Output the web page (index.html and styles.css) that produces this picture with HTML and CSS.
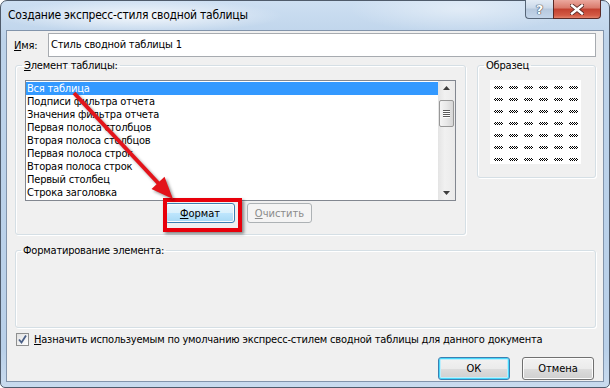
FILE: index.html
```html
<!DOCTYPE html>
<html lang="ru">
<head>
<meta charset="utf-8">
<title>Создание экспресс-стиля сводной таблицы</title>
<link rel="stylesheet" href="styles.css">
</head>
<body>
<div class="window">
  <div class="titlebar">
    <span class="title">Создание экспресс-стиля сводной таблицы</span>
    <div class="caption-btns">
      <div class="cbtn help">?</div>
      <div class="cbtn close">
        <svg width="14" height="11" viewBox="0 0 14 11">
          <path d="M2 1.5 L12 9.5 M12 1.5 L2 9.5" stroke="#5a2a26" stroke-width="4.2" stroke-linecap="square" fill="none"/>
          <path d="M2 1.5 L12 9.5 M12 1.5 L2 9.5" stroke="#ffffff" stroke-width="2.4" stroke-linecap="square" fill="none"/>
        </svg>
      </div>
    </div>
  </div>
  <div class="client">
    <div class="name-row">
      <span class="name-label"><u>И</u>мя:</span>
      <div class="textbox">Стиль сводной таблицы 1</div>
    </div>
    <div class="main-row">
      <fieldset class="group elem">
        <legend><u>Э</u>лемент таблицы:</legend>
        <div class="listbox">
          <ul class="items">
            <li class="sel">Вся таблица</li>
            <li>Подписи фильтра отчета</li>
            <li>Значения фильтра отчета</li>
            <li>Первая полоса столбцов</li>
            <li>Вторая полоса столбцов</li>
            <li>Первая полоса строк</li>
            <li>Вторая полоса строк</li>
            <li>Первый столбец</li>
            <li>Строка заголовка</li>
          </ul>
          <div class="scrollbar">
            <svg class="sarrow" width="17" height="14" viewBox="0 0 17 14"><path d="M5 9 L12 9 L8.5 5 Z" fill="#3d3d3d"/></svg>
            <div class="thumb"><span></span><span></span><span></span><span></span></div>
            <div class="track"></div>
            <svg class="sarrow" width="17" height="14" viewBox="0 0 17 14"><path d="M5 5 L12 5 L8.5 9 Z" fill="#3d3d3d"/></svg>
          </div>
        </div>
        <div class="elem-btns">
          <span class="hl"><button class="btn hot"><u>Ф</u>ормат</button></span>
          <button class="btn disabled"><u>О</u>чистить</button>
        </div>
      </fieldset>
      <fieldset class="group sample">
        <legend>Образец</legend>
        <div class="preview">
          <i></i><i></i><i></i><i></i><i></i><i></i>
          <i></i><i></i><i></i><i></i><i></i><i></i>
          <i></i><i></i><i></i><i></i><i></i><i></i>
          <i></i><i></i><i></i><i></i><i></i><i></i>
          <i></i><i></i><i></i><i></i><i></i><i></i>
          <i></i><i></i><i></i><i></i><i></i><i></i>
          <i></i><i></i><i></i><i></i><i></i><i></i>
        </div>
      </fieldset>
    </div>
    <fieldset class="group formatting">
      <legend>Форматирование элемента:</legend>
    </fieldset>
    <div class="check-row">
      <span class="checkbox">
        <svg width="11" height="11" viewBox="0 0 11 11"><path d="M2 5.5 L4.5 8.5 L9 1.5" stroke="#4a5f86" stroke-width="1.8" fill="none"/></svg>
      </span>
      <span><u>Н</u>азначить используемым по умолчанию экспресс-стилем сводной таблицы для данного документа</span>
    </div>
    <div class="btn-row">
      <button class="btn big default">ОК</button>
      <button class="btn big">Отмена</button>
    </div>
  </div>
  <svg class="arrow" width="610" height="388" viewBox="0 0 610 388">
    <line x1="74" y1="93" x2="160" y2="185" stroke="#e3141b" stroke-width="4"/>
    <path d="M173 199 L151.5 189 L164.5 176.8 Z" fill="#e3141b"/>
  </svg>
</div>
</body>
</html>
```

FILE: styles.css
```css
* { box-sizing: border-box; }
html, body { margin: 0; padding: 0; }
body {
  width: 610px;
  height: 388px;
  overflow: hidden;
  background: #ffffff;
  font-family: "DejaVu Sans Condensed", "Liberation Sans", sans-serif;
  font-size: 11px;
  letter-spacing: -0.2px;
  color: #000;
}
u { text-decoration: underline; text-underline-offset: 1px; }

.window {
  position: relative;
  width: 610px;
  height: 388px;
  border: 1px solid #4f5b6b;
  border-radius: 7px 7px 5px 5px;
  padding: 0 5px 5px 5px;
  display: flex;
  flex-direction: column;
  background:
    radial-gradient(ellipse 190px 22px at 140px 15px, rgba(255,255,255,0.8), rgba(255,255,255,0) 75%),
    radial-gradient(ellipse 140px 30px at 460px 8px, rgba(255,255,255,0.45), rgba(255,255,255,0) 80%),
    linear-gradient(#cddff2, #bdd3ea 40px, #b9d0e9 90%, #c9dbee);
}

.titlebar {
  height: 29px;
  display: flex;
  align-items: flex-start;
}
.title {
  flex: 1;
  margin: 6px 0 0 2px;
  line-height: 16px;
  font-size: 12px;
  letter-spacing: -0.23px;
  color: #000;
}
.caption-btns {
  display: flex;
  margin: -1px 3px 0 0;
}
.cbtn {
  height: 19px;
  display: flex;
  align-items: center;
  justify-content: center;
  border: 1px solid #566577;
  border-top: none;
}
.help {
  width: 28px;
  border-radius: 0 0 0 4px;
  border-right: none;
  background: linear-gradient(#e2ebf5, #cbd9e9 45%, #b6c8dd 50%, #c4d6ea);
  color: #ffffff;
  font-family: "DejaVu Sans", sans-serif;
  font-weight: bold;
  font-size: 13px;
  letter-spacing: 0;
  text-shadow: 0 0 1px #3d4a5a, 0 0 1px #3d4a5a, 0 0 1px #3d4a5a;
}
.close {
  width: 48px;
  border-radius: 0 0 4px 0;
  border-color: #5b2a26;
  background: linear-gradient(#eba89e, #d9796a 45%, #c2402f 50%, #d35a44 85%, #e2826b);
}

.client {
  flex: 1;
  background: #f0f0f0;
  border: 1px solid #8294ab;
  padding: 2px 7px 0 8px;
  display: flex;
  flex-direction: column;
}

.name-row {
  display: flex;
  align-items: center;
  height: 24px;
}
.name-label {
  width: 34px;
  margin-left: -1px;
}
.textbox {
  flex: 1;
  height: 24px;
  line-height: 22px;
  background: #fff;
  border: 1px solid #a7abb0;
  padding-left: 2px;
}

.main-row {
  display: flex;
  align-items: flex-start;
  gap: 11px;
  margin-top: 2px;
}

.group {
  margin: 0;
  min-width: 0;
  border: 1px solid #d5dfe5;
  border-radius: 3px;
  box-shadow: inset 1px 1px 0 #fff, 1px 1px 0 #fff;
}
.group legend {
  padding: 0 2px;
  line-height: 13px;
}

.elem {
  width: 451px;
  padding: 8px 9px 11px 9px;
}
.elem legend { margin-left: -3px; }

.listbox {
  display: flex;
  height: 121px;
  border: 1px solid #828790;
  background: #fff;
}
.items {
  flex: 1;
  list-style: none;
  margin: 0;
  padding: 1px 0 0 0;
}
.items li {
  height: 13px;
  line-height: 13px;
  padding-left: 1px;
  white-space: nowrap;
}
.items li.sel {
  background: #3399ff;
  color: #fff;
}
.scrollbar {
  width: 17px;
  display: flex;
  flex-direction: column;
  align-items: center;
  background: linear-gradient(to right, #e4e4e4, #f1f1f1 40%, #eaeaea);
}
.sarrow { display: block; flex: none; }
.thumb {
  width: 15px;
  height: 27px;
  margin-top: 5px;
  border: 1px solid #979797;
  border-radius: 2px;
  background: linear-gradient(to right, #f4f4f4, #e8e8e8 50%, #d6d6d6);
  display: flex;
  flex-direction: column;
  align-items: center;
  justify-content: center;
  gap: 1px;
}
.thumb span {
  width: 7px;
  height: 1px;
  background: #5a5a5a;
  box-shadow: 0 1px 0 #fff;
}
.track { flex: 1; }

.elem-btns {
  display: flex;
  justify-content: center;
  gap: 12px;
  margin-top: 2px;
  padding-right: 4px;
}
.hl { position: relative; display: flex; }
.hl::after {
  content: "";
  position: absolute;
  top: -5px;
  left: -2px;
  right: -7px;
  bottom: -9px;
  border: 4px solid #e8000b;
  box-shadow: 2px 2px 3px rgba(0,0,0,0.45);
}

.btn {
  font: inherit;
  color: #000;
  height: 20px;
  padding: 0;
  border: 1px solid #707070;
  border-radius: 3px;
  background: linear-gradient(#f2f2f2, #ebebeb 50%, #dddddd 50%, #cfcfcf);
  box-shadow: inset 0 0 0 1px #fcfcfc;
}
.btn.hot {
  width: 70px;
  border-color: #3c7fb1;
  background: linear-gradient(#eaf6fd, #d9f0fc 50%, #bee6fd 50%, #a7d9f5);
}
.btn.disabled {
  width: 65px;
  color: #8b8b8b;
  border-color: #adb2b5;
  background: #f4f4f4;
  box-shadow: none;
}

.sample {
  width: 119px;
  padding: 8px 0 13px 12px;
}
.sample legend { margin-left: -6px; }
.preview {
  width: 91px;
  height: 84px;
  background: #fff;
  padding: 6px 4px;
  display: grid;
  grid-template-columns: repeat(6, 9px);
  grid-auto-rows: 3px;
  column-gap: 6px;
  row-gap: 9px;
}
.preview i {
  display: block;
  width: 9px;
  height: 3px;
  background: repeating-conic-gradient(#000 0 25%, #fff 0 50%) 0 0 / 2px 2px;
}

.formatting {
  margin-top: 9px;
  height: 84px;
  padding: 0 8px;
}
.formatting legend { margin-left: -3px; }

.check-row {
  display: flex;
  align-items: center;
  gap: 5px;
  margin-top: 5px;
  height: 13px;
}
.checkbox {
  width: 13px;
  height: 13px;
  margin-left: 1px;
  border: 1px solid #8e8f8f;
  background: linear-gradient(135deg, #e1e1e1, #f6f6f6 70%, #fff);
  display: flex;
  align-items: center;
  justify-content: center;
}
.checkbox svg { display: block; }

.btn-row {
  display: flex;
  justify-content: flex-end;
  gap: 12px;
  margin-top: 11px;
  padding-right: 2px;
}
.btn.big {
  width: 72px;
  height: 23px;
}
.btn.default {
  border-color: #3c7fb1;
  box-shadow: inset 0 0 0 1px #48d8fb, inset 0 0 0 2px #bdeefc;
}

.arrow {
  position: absolute;
  left: -1px;
  top: -1px;
  pointer-events: none;
  filter: drop-shadow(2px 2px 1.5px rgba(0,0,0,0.4));
}
```
